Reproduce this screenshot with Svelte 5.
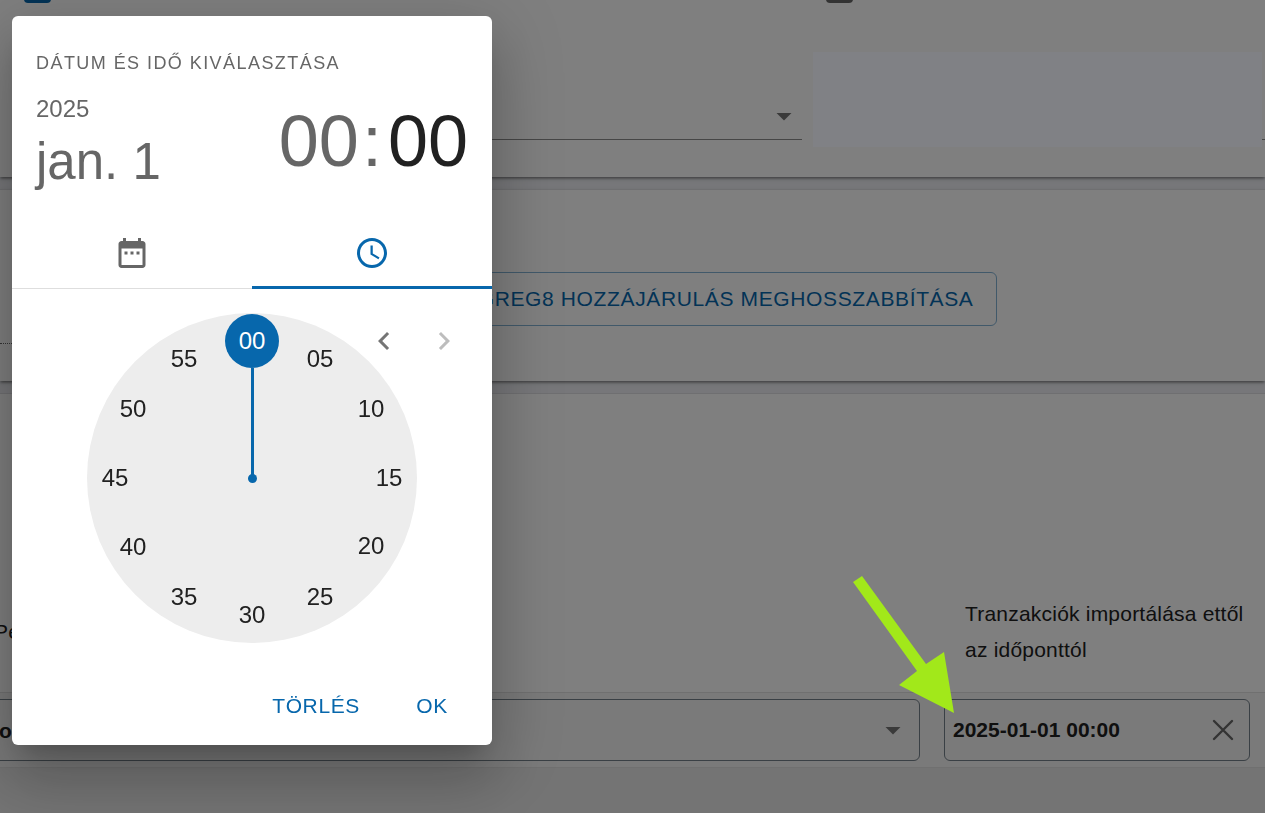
<script lang="ts">
	const radius = 137;
	const minutes = Array.from({ length: 12 }, (_, i) => i * 5);

	let selected = $state(0);
	let tab = $state("time");
	let dateValue = $state("2025-01-01 00:00");

	function pad(n: number) {
		return String(n).padStart(2, "0");
	}

	function offsetX(m: number) {
		return Math.round(radius * Math.sin((m * Math.PI) / 30));
	}

	function offsetY(m: number) {
		return Math.round(-radius * Math.cos((m * Math.PI) / 30));
	}

	function clear() {
		dateValue = "";
	}
</script>

{#snippet caret()}
	<svg class="caret" viewBox="0 0 24 24" aria-hidden="true"><path d="M7 10l5 5 5-5z" /></svg>
{/snippet}

<div class="page">
	<section class="card settings">
		<input class="check" type="checkbox" checked aria-label="Aktív" />
		<input class="check" type="checkbox" aria-label="Archivált" />
		<div class="field">
			<select aria-label="Bank"><option></option></select>
			{@render caret()}
		</div>
		<div class="field"><input type="text" aria-label="Típus" /></div>
	</section>

	<section class="card consent">
		<button class="outlined">GREG8 HOZZÁJÁRULÁS MEGHOSSZABBÍTÁSA</button>
		<div class="dotted"></div>
	</section>

	<section class="card accounts">
		<table>
			<thead>
				<tr>
					<th id="col-account">Pé</th>
					<th id="col-from" class="from">Tranzakciók importálása ettől az időponttól</th>
				</tr>
			</thead>
			<tbody>
				<tr>
					<td>
						<div class="box">
							<select aria-labelledby="col-account"><option>o</option></select>
							{@render caret()}
						</div>
					</td>
					<td class="from">
						<div class="box date">
							<input type="text" aria-labelledby="col-from" bind:value={dateValue} />
							<button class="clear" aria-label="Mező ürítése" onclick={clear}>
								<svg viewBox="0 0 24 24"><path d="M3 3l18 18M21 3L3 21" /></svg>
							</button>
						</div>
					</td>
				</tr>
			</tbody>
		</table>
	</section>

	<div class="rest"></div>
</div>

<div class="backdrop"></div>
<div class="blank"></div>

<svg class="pointer" viewBox="0 0 101 137" aria-hidden="true">
	<path d="M0 6L9 0L73 88L91 76L101 137L46 109L64 95Z" />
</svg>

<div class="dialog" role="dialog" aria-labelledby="picker-title">
	<header>
		<div class="title" id="picker-title">DÁTUM ÉS IDŐ KIVÁLASZTÁSA</div>
		<div class="summary">
			<div class="day">
				<button class="year">2025</button>
				<button class="month">jan. 1</button>
			</div>
			<div class="clock-value">
				<button>00</button>
				<span>:</span>
				<button class="active">{pad(selected)}</button>
			</div>
		</div>
	</header>

	<div class="tabs" role="tablist">
		<button role="tab" aria-label="Dátum" aria-selected={tab === "date"} onclick={() => (tab = "date")}>
			<svg viewBox="0 0 24 24">
				<path d="M9 11H7v2h2v-2zm4 0h-2v2h2v-2zm4 0h-2v2h2v-2zm2-7h-1V2h-2v2H8V2H6v2H5c-1.11 0-1.99.9-1.99 2L3 20c0 1.1.89 2 2 2h14c1.1 0 2-.9 2-2V6c0-1.1-.9-2-2-2zm0 16H5V9h14v11z" />
			</svg>
		</button>
		<button role="tab" aria-label="Idő" aria-selected={tab === "time"} onclick={() => (tab = "time")}>
			<svg viewBox="0 0 24 24">
				<path d="M11.99 2C6.47 2 2 6.48 2 12s4.47 10 9.99 10C17.52 22 22 17.52 22 12S17.52 2 11.99 2zM12 20c-4.42 0-8-3.58-8-8s3.58-8 8-8 8 3.58 8 8-3.58 8-8 8z" />
				<path d="M12.5 7H11v6l5.25 3.15.75-1.23-4.5-2.67z" />
			</svg>
		</button>
	</div>

	<div class="view">
		<div class="clock">
			<div class="hand" style="transform: rotate({selected * 6}deg)"></div>
			<div class="pin"></div>
			{#each minutes as m}
				<button
					class="minute"
					class:selected={m === selected}
					style="transform: translate({offsetX(m)}px, {offsetY(m)}px)"
					onclick={() => (selected = m)}>{pad(m)}</button>
			{/each}
		</div>
		<div class="switcher">
			<button aria-label="Előző nézet">
				<svg viewBox="0 0 24 24"><path d="M15.41 16.59L10.83 12l4.58-4.59L14 6l-6 6 6 6 1.41-1.41z" /></svg>
			</button>
			<button aria-label="Következő nézet" disabled>
				<svg viewBox="0 0 24 24"><path d="M8.59 16.59L13.17 12 8.59 7.41 10 6l6 6-6 6-1.41-1.41z" /></svg>
			</button>
		</div>
	</div>

	<footer>
		<button onclick={clear}>TÖRLÉS</button>
		<button>OK</button>
	</footer>
</div>

<style>
	:global(body) {
		overflow: hidden;
		font-family: "Liberation Sans", Arial, sans-serif;
		font-size: 21px;
		color: #212121;
	}

	button, input, select {
		box-sizing: border-box;
		margin: 0;
		padding: 0;
		border: 0;
		outline: 0;
		background: none;
		font: inherit;
		color: inherit;
		appearance: none;
	}

	button {
		cursor: pointer;
	}

	svg {
		display: block;
		width: 36px;
		height: 36px;
		fill: currentColor;
	}

	/* page behind the dialog, scrolled a little */
	.page {
		display: flex;
		flex-direction: column;
		gap: 12px;
		min-height: calc(100vh + 24px);
		margin-top: -24px;
		background: #eeeff4;
	}

	.card {
		box-sizing: border-box;
		background: #fff;
		border-top: 1px solid #dfdfe2;
		box-shadow: 0 3px 2px -2px rgba(0, 0, 0, 0.2), 0 2px 2px rgba(0, 0, 0, 0.2), 0 2px 5px rgba(0, 0, 0, 0.12);
	}

	.settings {
		display: grid;
		grid-template-columns: 23fr 13fr;
		column-gap: 24px;
		row-gap: 89px;
		padding: 0 0 37px 24px;
		border-top: 0;
	}

	.check {
		width: 27px;
		height: 27px;
		border: 3px solid #666;
		border-radius: 4px;
	}

	.check:checked {
		border-color: #0767ac;
		background: #0767ac;
	}

	.field {
		position: relative;
	}

	.field select,
	.field input {
		display: block;
		width: 100%;
		height: 48px;
		border-bottom: 1px solid #8c8c8c;
	}

	.caret {
		position: absolute;
		right: 0;
		top: calc(50% - 18px);
		color: #757575;
		pointer-events: none;
	}

	.consent {
		display: flex;
		flex-direction: column;
		align-items: center;
		padding: 82px 0 37px;
	}

	.outlined {
		min-width: 728px;
		height: 54px;
		padding: 0 22px;
		border: 1px solid #83b3d5;
		border-radius: 6px;
		color: #0767ac;
		letter-spacing: 0.03em;
		text-align: right;
	}

	.dotted {
		align-self: flex-start;
		width: 240px;
		margin-top: 17px;
		border-bottom: 1px dotted #666;
	}

	.accounts {
		padding-top: 178px;
		box-shadow: none;
	}

	table {
		width: calc(100% + 18px);
		margin-left: -18px;
		table-layout: fixed;
		border-collapse: separate;
		border-spacing: 0;
	}

	th, td {
		box-sizing: border-box;
		border-bottom: 1px solid #e0e0e0;
	}

	th {
		padding: 24px 12px;
		font-weight: 400;
		line-height: 36px;
		letter-spacing: 0.01em;
		text-align: left;
	}

	td {
		padding: 6px 12px;
		background: #f4f4f4;
	}

	.from {
		width: 333px;
		padding-right: 15px;
	}

	th.from {
		padding-left: 33px;
	}

	.box {
		position: relative;
		display: flex;
		align-items: center;
		box-sizing: border-box;
		height: 62px;
		border: 1px solid #74808a;
		border-radius: 6px;
		font-weight: 700;
	}

	.box select {
		width: 100%;
		height: 60px;
		padding-left: 4px;
	}

	.box .caret {
		right: 8px;
	}

	.date input {
		flex: 1;
		min-width: 0;
		height: 60px;
		padding-left: 8px;
	}

	.clear {
		padding: 0 14px;
	}

	.clear svg {
		width: 24px;
		height: 24px;
		fill: none;
		stroke: #666;
		stroke-width: 2.4;
		stroke-linecap: round;
	}

	.rest {
		flex: 1;
		margin-top: -12px;
		background: #e8e8e8;
	}

	.backdrop {
		position: fixed;
		inset: 0;
		background: rgba(0, 0, 0, 0.5);
	}

	/* covers the bank type field */
	.blank {
		position: absolute;
		top: 52px;
		left: 813px;
		right: 3px;
		height: 95px;
		background: #808185;
	}

	.pointer {
		position: absolute;
		left: 853px;
		top: 576px;
		width: 101px;
		height: 137px;
		color: #a2e81a;
	}

	.dialog {
		position: absolute;
		top: 16px;
		left: 12px;
		width: 480px;
		border-radius: 6px;
		background: #fff;
		box-shadow: 0 17px 23px -11px rgba(0, 0, 0, 0.2), 0 36px 57px 5px rgba(0, 0, 0, 0.14), 0 14px 69px 12px rgba(0, 0, 0, 0.12);
	}

	header {
		padding: 24px;
		color: #666;
	}

	.title {
		font-size: 18px;
		line-height: 46px;
		padding-bottom: 2px;
		letter-spacing: 0.08em;
	}

	.summary {
		display: flex;
		justify-content: space-between;
		align-items: center;
	}

	.day {
		display: flex;
		flex-direction: column;
		align-items: flex-start;
	}

	.year {
		font-size: 24px;
		line-height: 42px;
	}

	.month {
		font-size: 51px;
		line-height: 63px;
	}

	.clock-value {
		display: flex;
		font-size: 72px;
		line-height: 84px;
	}

	.clock-value span {
		margin: 0 6px 0 3px;
	}

	.active {
		color: #212121;
	}

	.tabs {
		display: flex;
		box-shadow: inset 0 -1px #dedede;
	}

	.tabs button {
		display: flex;
		flex: 1;
		align-items: center;
		justify-content: center;
		height: 72px;
		border-top: 3px solid transparent;
		border-bottom: 3px solid transparent;
		color: #666;
	}

	.tabs button[aria-selected="true"] {
		border-bottom-color: #0767ac;
		color: #0767ac;
	}

	.view {
		position: relative;
		display: flex;
		justify-content: center;
		padding: 24px 0;
	}

	.clock {
		display: grid;
		place-items: center;
		width: 330px;
		height: 330px;
		border-radius: 50%;
		background: #ededed;
	}

	.clock > * {
		grid-area: 1 / 1;
	}

	.hand {
		width: 3px;
		height: 110px;
		margin-bottom: 110px;
		background: #0767ac;
		transform-origin: bottom;
	}

	.pin {
		width: 9px;
		height: 9px;
		border-radius: 50%;
		background: #0767ac;
	}

	.minute {
		width: 54px;
		height: 54px;
		border-radius: 50%;
		font-size: 24px;
	}

	.selected {
		background: #0767ac;
		color: #fff;
	}

	.switcher {
		position: absolute;
		top: 22px;
		right: 18px;
		display: flex;
		color: #757575;
	}

	.switcher button {
		padding: 12px;
	}

	.switcher button:disabled {
		color: #bdbdbd;
	}

	footer {
		display: flex;
		justify-content: flex-end;
		gap: 12px;
		padding: 12px;
	}

	footer button {
		min-width: 96px;
		height: 54px;
		padding: 0 12px;
		color: #0767ac;
		letter-spacing: 0.03em;
	}
</style>
